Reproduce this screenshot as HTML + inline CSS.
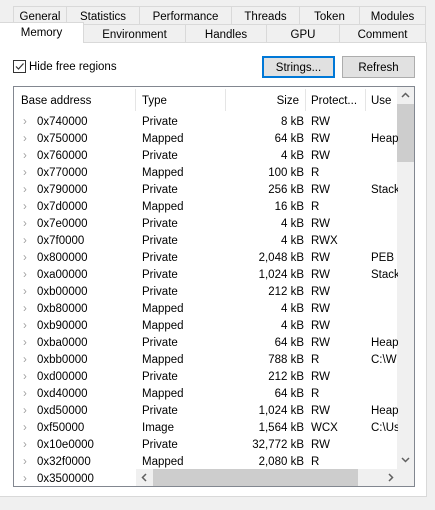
<html><head><style>
body{margin:0;width:435px;height:510px;background:#f0f0f0;font-family:"Liberation Sans",sans-serif;font-size:11.5px;color:#000;position:relative;overflow:hidden}
.a{position:absolute}
.tab{position:absolute;border:1px solid #d9d9d9;border-bottom:none;background:#f0f0f0;text-align:center;box-sizing:border-box;line-height:21px;height:18px}
.row{position:absolute;left:14px;width:384px;height:17px;line-height:17px;white-space:nowrap;overflow:hidden}
.row span{position:absolute}
.btn{position:absolute;border:1px solid #adadad;background:#e1e1e1;text-align:center;box-sizing:border-box}
</style></head><body>
<div class="tab" style="left:13px;top:6px;width:54px">General</div>
<div class="tab" style="left:66px;top:6px;width:74px">Statistics</div>
<div class="tab" style="left:139px;top:6px;width:93px">Performance</div>
<div class="tab" style="left:231px;top:6px;width:69px">Threads</div>
<div class="tab" style="left:299px;top:6px;width:61px">Token</div>
<div class="tab" style="left:359px;top:6px;width:67px">Modules</div>
<div class="a" style="left:0;top:42px;width:427px;height:455px;background:#fff;border:1px solid #d9d9d9;border-left:none;box-sizing:border-box"></div>
<div class="tab" style="left:83px;top:24px;width:103px">Environment</div>
<div class="tab" style="left:185px;top:24px;width:82px">Handles</div>
<div class="tab" style="left:266px;top:24px;width:74px">GPU</div>
<div class="tab" style="left:339px;top:24px;width:87px">Comment</div>
<div class="tab" style="left:0;top:22px;width:84px;height:21px;background:#fff;line-height:20px;border-left:none">Memory</div>
<div class="a" style="left:13px;top:60px;width:13px;height:13px;border:1px solid #333;box-sizing:border-box;background:#fff"><svg width="11" height="11" style="position:absolute;left:0;top:0"><path d="M2 5.5 L4.5 8 L9.5 2.5" stroke="#333" stroke-width="1.2" fill="none"/></svg></div>
<div class="a" style="left:29px;top:61px">Hide free regions</div>
<div class="btn" style="left:262px;top:56px;width:73px;height:22px;border:2px solid #0078d7;line-height:20px">Strings...</div>
<div class="btn" style="left:342px;top:56px;width:73px;height:22px;line-height:22px">Refresh</div>
<div class="a" style="left:13px;top:86px;width:402px;height:401px;border:1px solid #828790;box-sizing:border-box;background:#fff;overflow:hidden">
<div class="a" style="left:0;top:0;width:400px;height:25px;line-height:28px">
<span class="a" style="left:7px">Base address</span><span class="a" style="left:128px">Type</span><span class="a" style="right:115px">Size</span><span class="a" style="left:297px">Protect...</span><span class="a" style="left:357px">Use</span>
<div class="a" style="left:121px;top:2px;width:1px;height:22px;background:#e5e5e5"></div>
<div class="a" style="left:211px;top:2px;width:1px;height:22px;background:#e5e5e5"></div>
<div class="a" style="left:291px;top:2px;width:1px;height:22px;background:#e5e5e5"></div>
<div class="a" style="left:351px;top:2px;width:1px;height:22px;background:#e5e5e5"></div>
</div>
<div class="a" style="right:0;top:0;width:17px;height:382px;background:#f0f0f0"><div class="a" style="left:0;top:17px;width:17px;height:58px;background:#cdcdcd"></div><svg class="a" style="left:4px;top:5px" width="9" height="6"><path d="M1 5 L4.5 1.5 L8 5" stroke="#606060" stroke-width="1.5" fill="none"/></svg><svg class="a" style="left:4px;bottom:6px" width="9" height="6"><path d="M1 1 L4.5 4.5 L8 1" stroke="#606060" stroke-width="1.5" fill="none"/></svg></div>
<div class="a" style="left:122px;top:382px;width:263px;height:17px;background:#f0f0f0"><svg class="a" style="left:5px;top:4px" width="6" height="9"><path d="M5 1 L1.5 4.5 L5 8" stroke="#606060" stroke-width="1.5" fill="none"/></svg><div class="a" style="left:17px;top:0;width:205px;height:17px;background:#cdcdcd"></div><svg class="a" style="right:5px;top:4px" width="6" height="9"><path d="M1 1 L4.5 4.5 L1 8" stroke="#606060" stroke-width="1.5" fill="none"/></svg></div>
<div class="a" style="left:385px;top:382px;width:17px;height:17px;background:#f0f0f0"></div>
</div>
<div id="rows"></div>
<script>
var d=[["0x740000","Private","8 kB","RW",""],["0x750000","Mapped","64 kB","RW","Heap"],["0x760000","Private","4 kB","RW",""],["0x770000","Mapped","100 kB","R",""],["0x790000","Private","256 kB","RW","Stack"],["0x7d0000","Mapped","16 kB","R",""],["0x7e0000","Private","4 kB","RW",""],["0x7f0000","Private","4 kB","RWX",""],["0x800000","Private","2,048 kB","RW","PEB"],["0xa00000","Private","1,024 kB","RW","Stack"],["0xb00000","Private","212 kB","RW",""],["0xb80000","Mapped","4 kB","RW",""],["0xb90000","Mapped","4 kB","RW",""],["0xba0000","Private","64 kB","RW","Heap"],["0xbb0000","Mapped","788 kB","R","C:\\W"],["0xd00000","Private","212 kB","RW",""],["0xd40000","Mapped","64 kB","R",""],["0xd50000","Private","1,024 kB","RW","Heap"],["0xf50000","Image","1,564 kB","WCX","C:\\Us"],["0x10e0000","Private","32,772 kB","RW",""],["0x32f0000","Mapped","2,080 kB","R",""],["0x3500000","","","",""]];
var h="";d.forEach(function(r,i){var t=113+i*17;var w=i==21?122:384;h+='<div class="row" style="top:'+t+'px;width:'+w+'px;line-height:'+(i==21?'19px':'19px')+'"><span style="left:9px;color:#a0a0a0">&rsaquo;</span><span style="left:23px">'+r[0]+'</span><span style="left:128px">'+r[1]+'</span><span style="right:94px">'+r[2]+'</span><span style="left:297px">'+r[3]+'</span><span style="left:357px;width:27px;overflow:hidden">'+r[4]+'</span></div>'});
document.getElementById("rows").innerHTML=h;
</script>
</body></html>
